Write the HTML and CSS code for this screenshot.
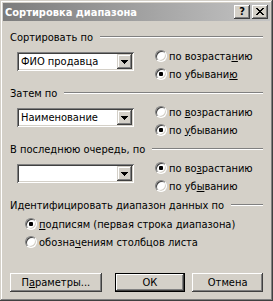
FILE: index.html
```html
<!DOCTYPE html>
<html>
<head>
  <title>Сортировка диапазона</title>
  <link rel="stylesheet" href="styles.css">
</head>
<body>
  <!-- Sort dialog window -->
  <div class="dialog">
    <div class="titlebar">
      <span class="caption">Сортировка диапазона</span>
      <div class="cap-btns">
        <span class="cap-btn cap-help">?</span>
        <span class="cap-btn">
          <svg width="8" height="7" viewBox="0 0 8 7" shape-rendering="crispEdges">
            <path d="M0 0h2v1H0zM6 0h2v1H6zM1 1h2v1H1zM5 1h2v1H5zM2 2h4v1H2zM3 3h2v1H3zM2 4h4v1H2zM1 5h2v1H1zM5 5h2v1H5zM0 6h2v1H0zM6 6h2v1H6z" fill="#000"/>
          </svg>
        </span>
      </div>
    </div>

    <div class="content">
      <!-- First key -->
      <div class="group">
        <div class="group-head"><span>Сортировать по</span><div class="etch"></div></div>
        <div class="group-row">
          <div class="combo">
            <span class="combo-text">ФИО продавца</span>
            <span class="combo-btn"><svg width="7" height="4" viewBox="0 0 7 4" shape-rendering="crispEdges"><path d="M0 0h7v1H0zM1 1h5v1H1zM2 2h3v1H2zM3 3h1v1H3z" fill="#000"/></svg></span>
          </div>
          <div class="radios">
            <div class="radio-row"><span class="radio"></span><span>по возраста<u>н</u>ию</span></div>
            <div class="radio-row"><span class="radio checked"></span><span>по убывани<u>ю</u></span></div>
          </div>
        </div>
      </div>

      <!-- Second key -->
      <div class="group">
        <div class="group-head"><span>Затем по</span><div class="etch"></div></div>
        <div class="group-row">
          <div class="combo">
            <span class="combo-text">Наименование</span>
            <span class="combo-btn"><svg width="7" height="4" viewBox="0 0 7 4" shape-rendering="crispEdges"><path d="M0 0h7v1H0zM1 1h5v1H1zM2 2h3v1H2zM3 3h1v1H3z" fill="#000"/></svg></span>
          </div>
          <div class="radios">
            <div class="radio-row"><span class="radio"></span><span>по <u>в</u>озрастанию</span></div>
            <div class="radio-row"><span class="radio checked"></span><span>по <u>у</u>быванию</span></div>
          </div>
        </div>
      </div>

      <!-- Third key -->
      <div class="group">
        <div class="group-head"><span>В последнюю очередь, по</span><div class="etch"></div></div>
        <div class="group-row">
          <div class="combo">
            <span class="combo-text"></span>
            <span class="combo-btn"><svg width="7" height="4" viewBox="0 0 7 4" shape-rendering="crispEdges"><path d="M0 0h7v1H0zM1 1h5v1H1zM2 2h3v1H2zM3 3h1v1H3z" fill="#000"/></svg></span>
          </div>
          <div class="radios">
            <div class="radio-row"><span class="radio checked"></span><span>по во<u>з</u>растанию</span></div>
            <div class="radio-row"><span class="radio"></span><span>по уб<u>ы</u>ванию</span></div>
          </div>
        </div>
      </div>

      <!-- Header row option -->
      <div class="group ident">
        <div class="group-head"><span>Идентифицировать диапазон данных по</span><div class="etch"></div></div>
        <div class="radios">
          <div class="radio-row"><span class="radio checked"></span><span><u>п</u>одписям (первая строка диапазона)</span></div>
          <div class="radio-row"><span class="radio"></span><span>обозна<u>ч</u>ениям столбцов листа</span></div>
        </div>
      </div>

      <div class="buttons">
        <span class="btn btn-params"><span>П<u>а</u>раметры...</span></span>
        <span class="btn btn-ok"><span>ОК</span></span>
        <span class="btn btn-cancel"><span>Отмена</span></span>
      </div>
    </div>
  </div>
</body>
</html>
```

FILE: styles.css
```css
body {
  margin: 0;
  background: #d4d0c8;
  font-family: Tahoma, "DejaVu Sans Condensed", "Liberation Sans", sans-serif;
  font-size: 11px;
  color: #000000;
}

/* Window frame */
.dialog {
  width: 273px;
  height: 301px;
  box-sizing: border-box;
  padding: 3px;
  background: #d4d0c8;
  box-shadow: inset -1px -1px #404040, inset 1px 1px #d4d0c8,
              inset -2px -2px #808080, inset 2px 2px #ffffff;
  display: flex;
  flex-direction: column;
}

/* Inactive caption */
.titlebar {
  height: 18px;
  display: flex;
  align-items: center;
  padding: 0 2px 0 2px;
  background: linear-gradient(to right, #7c7c7c, #c4c4c4);
}

.caption {
  flex: 1;
  color: #ffffff;
  font-weight: bold;
}

.cap-btns {
  display: flex;
  gap: 2px;
}

.cap-btn {
  width: 16px;
  height: 14px;
  box-sizing: border-box;
  background: #d4d0c8;
  box-shadow: inset -1px -1px #404040, inset 1px 1px #ffffff,
              inset -2px -2px #808080, inset 2px 2px #d4d0c8;
  display: flex;
  align-items: center;
  justify-content: center;
  padding-bottom: 1px;
}

.cap-help {
  font-weight: bold;
  font-size: 11px;
}

.content {
  flex: 1;
  display: flex;
  flex-direction: column;
  padding: 9px 7px 0 7px;
}

.group {
  margin-bottom: 3px;
}

.group-head {
  height: 14px;
  display: flex;
  align-items: center;
  gap: 7px;
}

/* Etched separator line */
.etch {
  flex: 1;
  height: 0;
  border-top: 1px solid #808080;
  border-bottom: 1px solid #ffffff;
}

.group-row {
  display: flex;
  margin-top: 3px;
}

.combo {
  width: 117px;
  height: 19px;
  margin: 5px 0 0 7px;
  box-sizing: border-box;
  padding: 2px;
  background: #ffffff;
  box-shadow: inset 1px 1px #808080, inset -1px -1px #ffffff,
              inset 2px 2px #404040, inset -2px -2px #d4d0c8;
  display: flex;
  align-items: center;
}

.combo-text {
  flex: 1;
  padding-left: 2px;
}

.combo-btn {
  width: 15px;
  height: 15px;
  box-sizing: border-box;
  background: #d4d0c8;
  box-shadow: inset -1px -1px #404040, inset 1px 1px #d4d0c8,
              inset -2px -2px #808080, inset 2px 2px #ffffff;
  display: flex;
  align-items: center;
  justify-content: center;
}

.radios {
  margin-left: 21px;
  display: flex;
  flex-direction: column;
}

.ident .radios {
  margin-left: 15px;
  margin-top: 3px;
}

.radio-row {
  height: 18px;
  display: flex;
  align-items: center;
}

/* Classic sunken radio */
.radio {
  position: relative;
  width: 12px;
  height: 12px;
  margin-right: 2px;
  box-sizing: border-box;
  border-radius: 50%;
  background: #ffffff;
  border: 1px solid;
  border-color: #808080 #ffffff #ffffff #808080;
  box-shadow: inset 1px 1px #404040, inset -1px -1px #d4d0c8;
}

.radio.checked::after {
  content: "";
  position: absolute;
  left: 3px;
  top: 3px;
  width: 4px;
  height: 4px;
  border-radius: 1px;
  background: #000000;
}

.buttons {
  display: flex;
  margin-top: 19px;
}

.btn {
  height: 19px;
  box-sizing: border-box;
  background: #d4d0c8;
  box-shadow: inset -1px -1px #404040, inset 1px 1px #ffffff,
              inset -2px -2px #808080, inset 2px 2px #d4d0c8;
  display: flex;
  align-items: center;
  justify-content: center;
}

.btn-params {
  width: 92px;
}

.btn-ok {
  width: 71px;
  margin-left: 13px;
  border: 1px solid #000000;
  box-shadow: inset -1px -1px #404040, inset 1px 1px #ffffff,
              inset -2px -2px #808080;
}

.btn-cancel {
  width: 71px;
  margin-left: 7px;
}
```
